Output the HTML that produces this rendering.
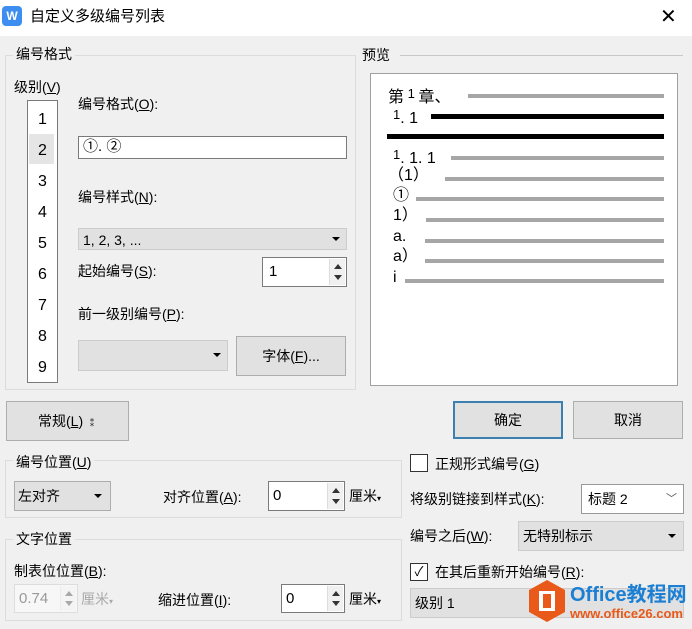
<!DOCTYPE html><html><head><meta charset="utf-8"><style>
*{margin:0;padding:0;box-sizing:border-box}
body{width:692px;height:629px;background:#f0f0f0;font-family:"Liberation Sans","Microsoft YaHei","Noto Sans CJK SC",sans-serif;font-size:14px;color:#000;position:relative;overflow:hidden}
.a{position:absolute;white-space:nowrap}
.t{line-height:18px}
.grp{position:absolute;border:1px solid #dcdcdc}
.lg{position:absolute;background:#f0f0f0;padding:0 3px;line-height:18px}
.wb{position:absolute;background:#fff;border:1px solid #7a7a7a}
.cb{position:absolute;background:#e1e1e1;border:1px solid #adadad}
.btn{position:absolute;background:#e1e1e1;border:1px solid #adadad;text-align:center}
.arr{position:absolute;width:0;height:0;border-left:4px solid transparent;border-right:4px solid transparent;border-top:4px solid #000}
.spin{position:absolute;right:1px;top:1px;bottom:1px;width:16px;background:#f0f0f0;border-left:1px solid #ddd}
.spin:before{content:"";position:absolute;left:4px;top:5px;border-left:4px solid transparent;border-right:4px solid transparent;border-bottom:5px solid #333}
.spin:after{content:"";position:absolute;left:4px;bottom:5px;border-left:4px solid transparent;border-right:4px solid transparent;border-top:5px solid #333}
.gl{position:absolute;height:4px;background:#a6a6a6;right:13px}
.bl{position:absolute;height:5px;background:#000;right:13px}
.pv{position:absolute;font-size:16px;line-height:17px;white-space:nowrap}
u{text-decoration:underline}
</style></head><body>
<div class="a" style="left:0;top:0;width:692px;height:36px;background:#fff"></div>
<div class="a" style="left:2px;top:6px;width:20px;height:20px;background:#3d8ef0;border-radius:4px;color:#fff;font-size:12px;font-weight:bold;text-align:center;line-height:20px">W</div>
<div class="a t" style="left:30px;top:8px;font-size:15px">自定义多级编号列表</div>
<div class="a" style="left:660px;top:5px;font-size:20px;line-height:24px;font-weight:300">✕</div>

<div class="grp" style="left:5px;top:55px;width:351px;height:335px"></div>
<div class="lg" style="left:13px;top:45px">编号格式</div>
<div class="a t" style="left:14px;top:78px">级别(<u>V</u>)</div>
<div class="wb" style="left:27px;top:100px;width:31px;height:283px"></div>
<div class="a" style="left:29px;top:134px;width:25px;height:30px;background:#e5e5e5"></div>
<div class="a" style="left:27px;top:104px;width:31px;text-align:center;font-size:16px;line-height:31px">1<br>2<br>3<br>4<br>5<br>6<br>7<br>8<br>9</div>
<div class="a t" style="left:78px;top:95px">编号格式(<u>O</u>):</div>
<div class="wb" style="left:78px;top:136px;width:269px;height:23px;padding-left:4px;line-height:20px;font-size:15px">①. ②</div>
<div class="a t" style="left:78px;top:188px">编号样式(<u>N</u>):</div>
<div class="cb" style="left:78px;top:228px;width:269px;height:22px;border-color:#ccc;padding-left:4px;line-height:22px">1, 2, 3, ...</div>
<div class="arr" style="left:332px;top:237px"></div>
<div class="a t" style="left:78px;top:262px">起始编号(<u>S</u>):</div>
<div class="wb" style="left:262px;top:257px;width:85px;height:30px;padding-left:6px;line-height:28px;font-size:15px">1<div class="spin"></div></div>
<div class="a t" style="left:78px;top:305px">前一级别编号(<u>P</u>):</div>
<div class="cb" style="left:78px;top:340px;width:150px;height:31px;border-color:#ccc"></div>
<div class="arr" style="left:213px;top:353px"></div>
<div class="btn" style="left:236px;top:336px;width:110px;height:40px;line-height:38px">字体(<u>F</u>)...</div>

<div class="lg" style="left:359px;top:46px">预览</div>
<div class="a" style="left:400px;top:55px;width:283px;height:1px;background:#c8c8c8"></div>
<div class="a" style="left:370px;top:73px;width:308px;height:313px;background:#fff;border:1px solid #a0a0a0">
 <div class="pv" style="left:17px;top:11px">第<span style="font-size:13px;vertical-align:4px"> 1 </span>章、</div><div class="gl" style="left:97px;top:20px"></div>
 <div class="pv" style="left:22px;top:32px"><span style="vertical-align:4px;font-size:13px">1</span>. 1</div><div class="bl" style="left:60px;top:40px"></div>
 <div class="bl" style="left:16px;top:60px"></div>
 <div class="pv" style="left:22px;top:72px"><span style="vertical-align:4px;font-size:13px">1</span>. 1. 1</div><div class="gl" style="left:80px;top:82px"></div>
 <div class="pv" style="left:17px;top:93px">（1）</div><div class="gl" style="left:74px;top:103px"></div>
 <div class="pv" style="left:22px;top:113px">①</div><div class="gl" style="left:45px;top:123px"></div>
 <div class="pv" style="left:22px;top:133px">1）</div><div class="gl" style="left:55px;top:144px"></div>
 <div class="pv" style="left:22px;top:154px">a.</div><div class="gl" style="left:54px;top:165px"></div>
 <div class="pv" style="left:22px;top:174px">a）</div><div class="gl" style="left:54px;top:185px"></div>
 <div class="pv" style="left:22px;top:195px">i</div><div class="gl" style="left:34px;top:205px"></div>
</div>

<div class="btn" style="left:6px;top:401px;width:123px;height:40px;line-height:38px">常规(<u>L</u>) <span style="font-size:10px">⁑</span></div>
<div class="btn" style="left:453px;top:401px;width:110px;height:38px;line-height:34px;border:2px solid #3c7fb1">确定</div>
<div class="btn" style="left:573px;top:401px;width:110px;height:38px;line-height:36px">取消</div>

<div class="grp" style="left:5px;top:460px;width:397px;height:58px"></div>
<div class="lg" style="left:13px;top:453px">编号位置(<u>U</u>)</div>
<div class="cb" style="left:14px;top:481px;width:97px;height:30px;line-height:28px;padding-left:3px">左对齐</div>
<div class="arr" style="left:94px;top:494px"></div>
<div class="a t" style="left:163px;top:488px">对齐位置(<u>A</u>):</div>
<div class="wb" style="left:268px;top:481px;width:77px;height:30px;padding-left:4px;line-height:28px;font-size:15px">0<div class="spin"></div></div>
<div class="a t" style="left:349px;top:487px">厘米<span style="font-size:8px">▾</span></div>

<div class="grp" style="left:5px;top:539px;width:397px;height:82px"></div>
<div class="lg" style="left:13px;top:530px">文字位置</div>
<div class="a t" style="left:14px;top:562px">制表位位置(<u>B</u>):</div>
<div class="a" style="left:14px;top:584px;width:64px;height:29px;background:#f7f7f7;border:1px solid #ddd;color:#999;padding-left:4px;line-height:27px;font-size:15px">0.74<div class="spin" style="opacity:.4"></div></div>
<div class="a t" style="left:81px;top:590px;color:#aaa">厘米<span style="font-size:8px">▾</span></div>
<div class="a t" style="left:158px;top:591px">缩进位置(<u>I</u>):</div>
<div class="wb" style="left:281px;top:584px;width:64px;height:29px;padding-left:4px;line-height:27px;font-size:15px">0<div class="spin"></div></div>
<div class="a t" style="left:349px;top:590px">厘米<span style="font-size:8px">▾</span></div>

<div class="a" style="left:410px;top:454px;width:18px;height:18px;background:#fff;border:1px solid #333"></div>
<div class="a t" style="left:435px;top:455px">正规形式编号(<u>G</u>)</div>
<div class="a t" style="left:410px;top:490px">将级别链接到样式(<u>K</u>):</div>
<div class="wb" style="left:581px;top:484px;width:103px;height:30px;padding-left:6px;line-height:28px;border-color:#999">标题 2<span class="a" style="right:6px;top:0;color:#555;font-size:11px">﹀</span></div>
<div class="a t" style="left:410px;top:527px">编号之后(<u>W</u>):</div>
<div class="cb" style="left:518px;top:521px;width:166px;height:30px;line-height:28px;padding-left:4px;border-color:#ccc">无特别标示</div>
<div class="arr" style="left:668px;top:534px"></div>
<div class="a" style="left:410px;top:563px;width:18px;height:18px;background:#fff;border:1px solid #333;font-size:13px;line-height:16px;text-align:center">✓</div>
<div class="a t" style="left:435px;top:563px">在其后重新开始编号(<u>R</u>):</div>
<div class="cb" style="left:410px;top:588px;width:274px;height:30px;line-height:28px;padding-left:4px;border-color:#ccc">级别 1</div>
<svg class="a" style="left:528px;top:579px" width="38" height="44" viewBox="0 0 38 44"><polygon points="19,1 37,11 37,33 19,43 1,33 1,11" fill="#e8591a"/><rect x="11" y="12" width="16" height="20" fill="#fff"/><rect x="15" y="15" width="8" height="14" fill="#e8591a"/></svg>
<div class="a" style="left:570px;top:584px;font-size:20px;font-weight:bold;color:#1b7fd4;line-height:22px">Office教程网</div>
<div class="a" style="left:570px;top:607px;font-size:13px;font-weight:bold;color:#e8591a;line-height:14px">www.office26.com</div>
</body></html>
